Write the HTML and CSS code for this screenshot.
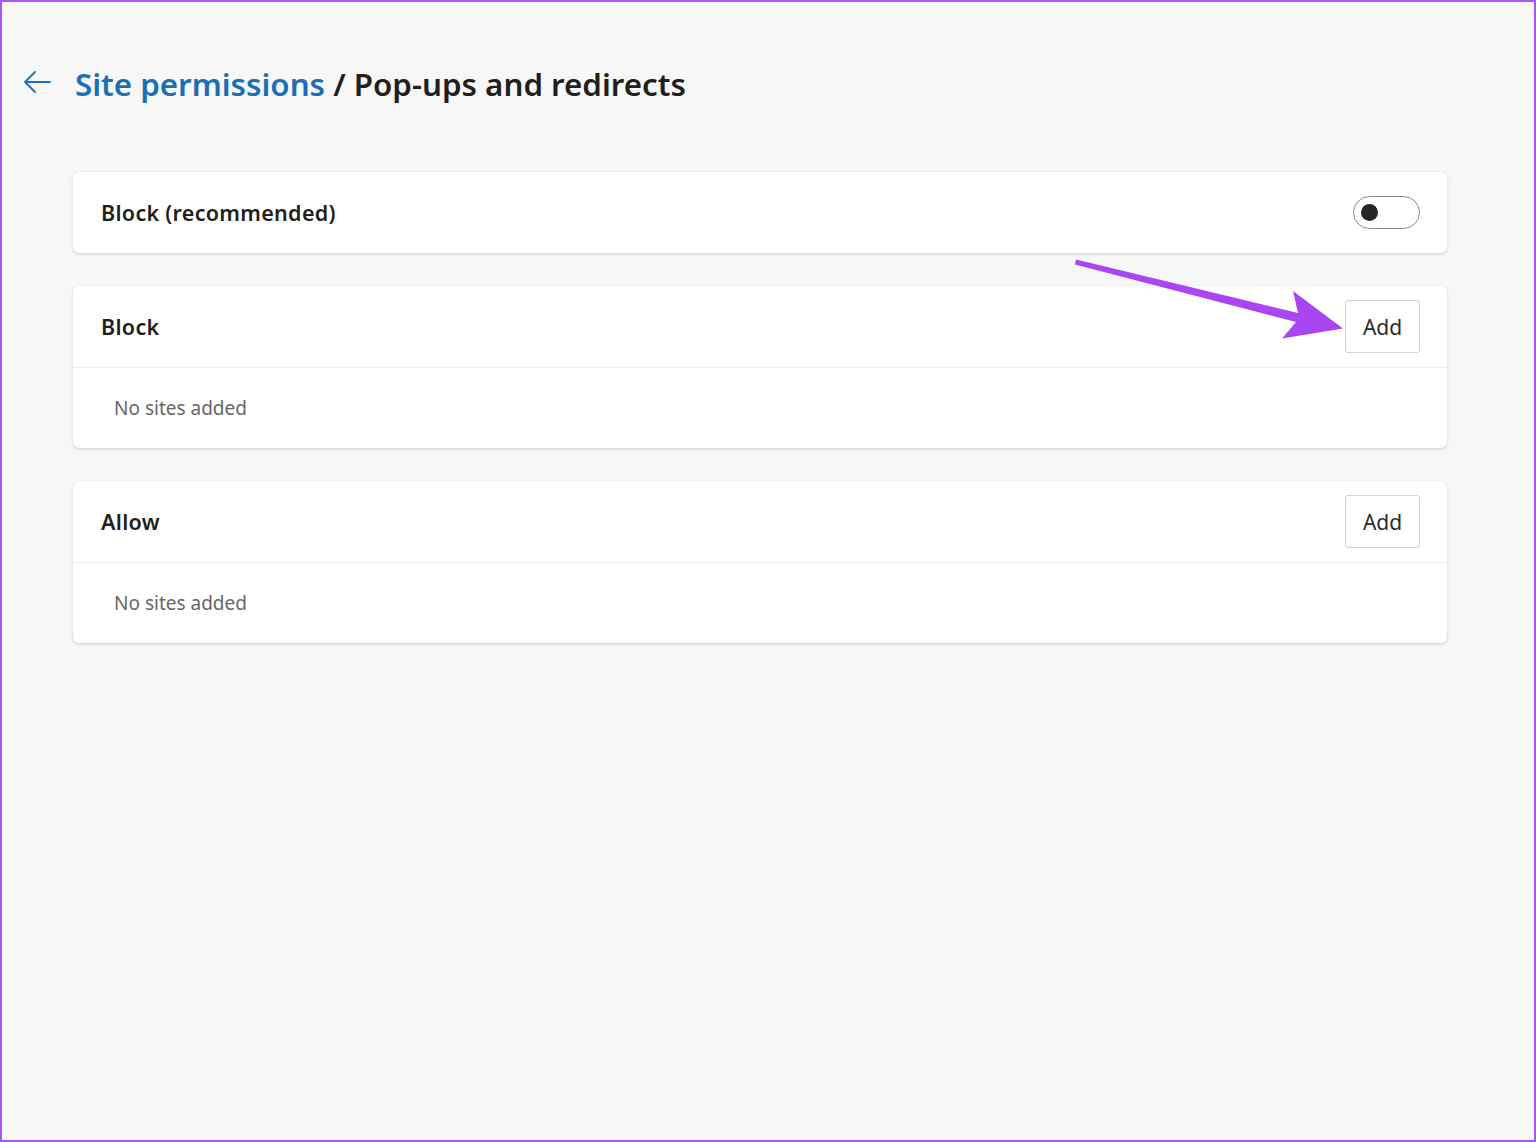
FILE: index.html
```html
<!DOCTYPE html>
<html lang="en">
<head>
<meta charset="utf-8">
<title>Pop-ups and redirects</title>
<link rel="stylesheet" href="styles.css">
</head>
<body>
<div class="frame">
  <header class="title-row">
    <svg class="back" width="30" height="26" viewBox="0 0 30 26" aria-hidden="true">
      <path d="M28 13H3M13 3L3 13l10 10" fill="none" stroke="#1b6fb8" stroke-width="1.8" stroke-linecap="round" stroke-linejoin="round"/>
    </svg>
    <h1 class="title"><span class="crumb">Site permissions</span> / Pop-ups and redirects</h1>
  </header>

  <main class="cards">
    <section class="card">
      <div class="card-head">
        <span class="label">Block (recommended)</span>
        <span class="toggle"><span class="knob"></span></span>
      </div>
    </section>

    <section class="card">
      <div class="card-head">
        <span class="label">Block</span>
        <button class="add">Add</button>
      </div>
      <div class="card-body">No sites added</div>
    </section>

    <section class="card">
      <div class="card-head">
        <span class="label">Allow</span>
        <button class="add">Add</button>
      </div>
      <div class="card-body">No sites added</div>
    </section>
  </main>

  <svg class="annot" width="1536" height="1142" viewBox="0 0 1536 1142" aria-hidden="true">
    <polygon points="1076,259.5 1298,313 1293,291 1343,328.5 1282,338.5 1296,322 1075,264.5" fill="#a846f3"/>
  </svg>
</div>
</body>
</html>
```
FILE: styles.css
```css
* { box-sizing: border-box; }
html, body { margin: 0; padding: 0; }
body {
  width: 1536px;
  height: 1142px;
  background: #f7f7f7;
  font-family: "Noto Sans", "Open Sans", "Liberation Sans", sans-serif;
  color: #1f1f1f;
  overflow: hidden;
}
.frame {
  position: relative;
  width: 1536px;
  height: 1142px;
  border: 2px solid #a855f7;
  background: #f7f7f7;
}
.title-row {
  display: flex;
  align-items: center;
  padding: 60px 0 0 20px;
  height: 104px;
}
.back { flex: none; margin-right: 23px; margin-top: -4px; }
.title {
  margin: 0;
  font-size: 31.3px;
  font-weight: 600;
  color: #1f1f1f;
  letter-spacing: 0;
  line-height: 40px;
}
.crumb { color: #1a6fb5; }

.cards {
  display: flex;
  flex-direction: column;
  gap: 33px;
  margin: 66px 0 0 71px;
  width: 1374px;
}
.card {
  background: #fff;
  border-radius: 6px;
  box-shadow: 0 1px 3px rgba(0,0,0,0.16), 0 0 1px rgba(0,0,0,0.1);
}
.card-head {
  display: flex;
  align-items: center;
  justify-content: space-between;
  height: 81px;
  padding: 0 27px 0 28px;
}
.label {
  font-size: 21.5px;
  font-weight: 600;
  color: #1f1f1f;
  letter-spacing: 0.3px;
}
.card-body {
  border-top: 1px solid #ececec;
  height: 81px;
  padding-left: 41px;
  display: flex;
  align-items: center;
  font-size: 19px;
  color: #666;
  letter-spacing: 0;
}
.toggle {
  display: flex;
  align-items: center;
  width: 67px;
  height: 33px;
  border: 1px solid #8a8a8a;
  border-radius: 17px;
  padding-left: 7px;
}
.knob {
  width: 17px;
  height: 17px;
  border-radius: 50%;
  background: #262626;
}
.add {
  width: 75px;
  height: 53px;
  border: 1px solid #d1d1d1;
  border-radius: 3px;
  background: #fff;
  font-family: inherit;
  font-size: 21px;
  color: #2b2b2b;
  padding: 0;
}
.annot {
  position: absolute;
  left: -2px;
  top: -2px;
  pointer-events: none;
}
```
